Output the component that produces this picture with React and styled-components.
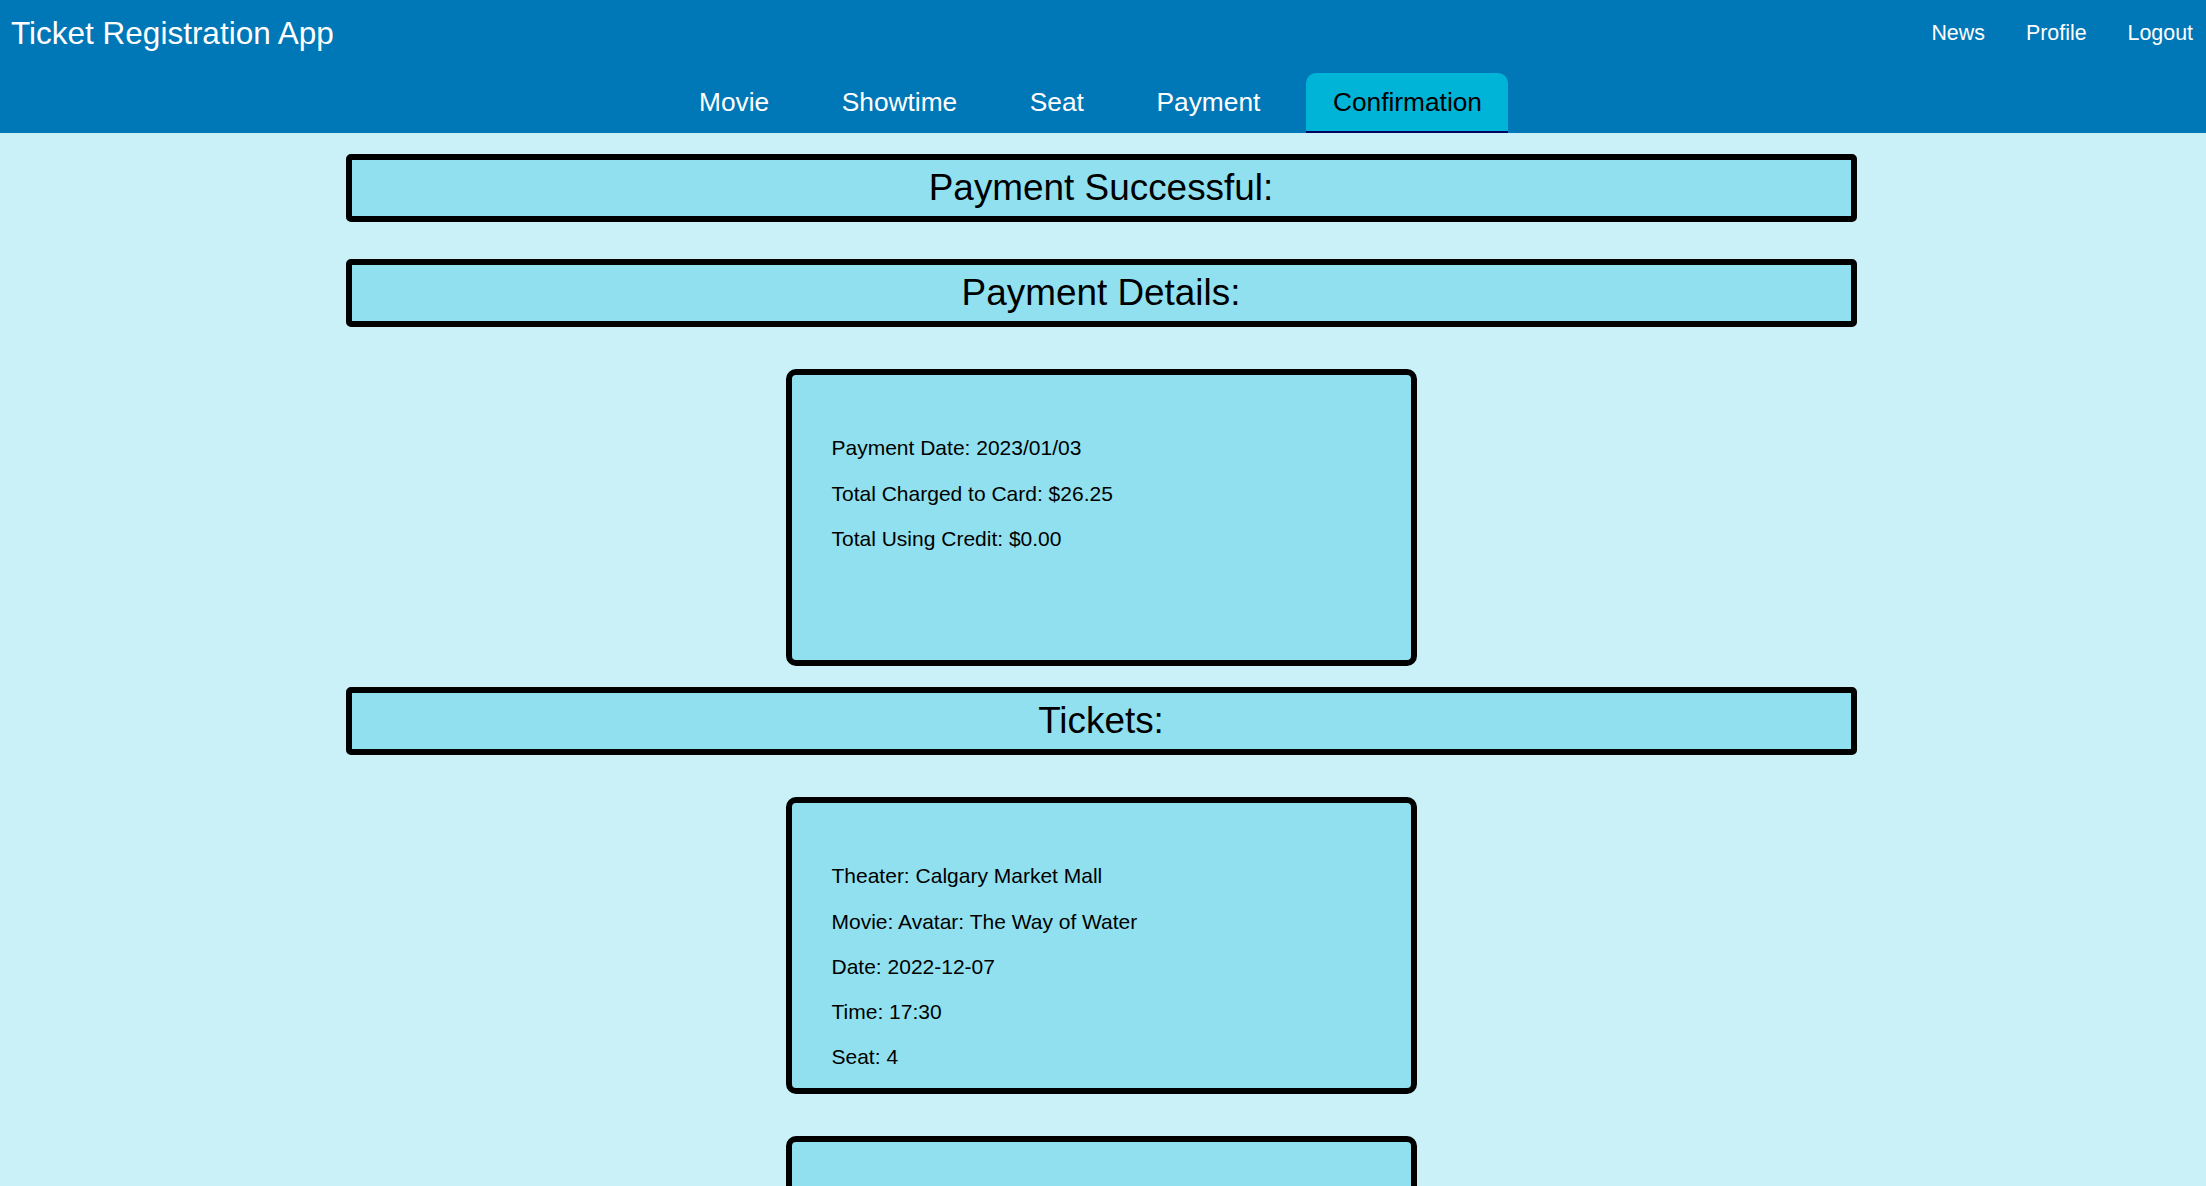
import React from "react";
import styled, { createGlobalStyle } from "styled-components";

const GlobalStyle = createGlobalStyle`
  html, body {
    margin: 0;
    padding: 0;
    background: #caf0f8;
    font-family: "Liberation Sans", Arial, sans-serif;
    color: #000;
  }
  * { box-sizing: border-box; }
`;

const Header = styled.header`
  background: #0077b6;
  display: flex;
  flex-direction: column;
`;

const TopRow = styled.div`
  height: 66px;
  display: flex;
  align-items: center;
  justify-content: space-between;
  padding: 0 13px 0 11px;
`;

const AppTitle = styled.h1`
  margin: 0;
  font-size: 31.5px;
  font-weight: 400;
  color: #fff;
  line-height: normal;
`;

const UserNav = styled.nav`
  display: flex;
  gap: 41px;
`;

const NavLink = styled.a`
  color: #fff;
  font-size: 21.4px;
  text-decoration: none;
  cursor: pointer;
`;

const TabRow = styled.nav`
  display: flex;
  justify-content: center;
  gap: 19.6px;
  padding: 7px 25px 0 0;
`;

const Tab = styled.a`
  display: block;
  padding: 14px 26.5px;
  line-height: 30px;
  font-size: 26.3px;
  color: ${(p) => (p.$active ? "#000" : "#fff")};
  background: ${(p) => (p.$active ? "#00b4d8" : "transparent")};
  border-bottom: 2px solid ${(p) => (p.$active ? "#03045e" : "transparent")};
  border-radius: 10px 10px 0 0;
  text-decoration: none;
  cursor: pointer;
`;

const Main = styled.main`
  display: block;
  padding: 0 4px 40px 0;
  overflow: hidden;
`;

const SectionTitle = styled.h2`
  width: 1511px;
  height: 68px;
  margin: 21px auto 37px;
  display: flex;
  align-items: center;
  justify-content: center;
  background: #90e0ef;
  border: 6px solid #000;
  border-radius: 5px;
  font-size: 36.9px;
  font-weight: 400;
  line-height: normal;
`;

const Card = styled.section`
  width: 631px;
  height: 297px;
  margin: 42px auto 21px;
  padding: 40px;
  background: #90e0ef;
  border: 6px solid #000;
  border-radius: 10px;
`;

const Line = styled.p`
  margin: 21.3px 0;
  font-size: 21px;
  line-height: normal;
`;

const tabs = ["Movie", "Showtime", "Seat", "Payment", "Confirmation"];

const tickets = [
  {
    theater: "Calgary Market Mall",
    movie: "Avatar: The Way of Water",
    date: "2022-12-07",
    time: "17:30",
    seat: "4",
  },
];

export default function App() {
  return (
    <>
      <GlobalStyle />
      <Header>
        <TopRow>
          <AppTitle>Ticket Registration App</AppTitle>
          <UserNav>
            <NavLink>News</NavLink>
            <NavLink>Profile</NavLink>
            <NavLink>Logout</NavLink>
          </UserNav>
        </TopRow>
        <TabRow>
          {tabs.map((t) => (
            <Tab key={t} $active={t === "Confirmation"}>
              {t}
            </Tab>
          ))}
        </TabRow>
      </Header>
      <Main>
        <SectionTitle>Payment Successful:</SectionTitle>
        <SectionTitle>Payment Details:</SectionTitle>
        <Card>
          <Line>Payment Date: 2023/01/03</Line>
          <Line>Total Charged to Card: $26.25</Line>
          <Line>Total Using Credit: $0.00</Line>
        </Card>
        <SectionTitle>Tickets:</SectionTitle>
        {tickets.map((t, i) => (
          <Card key={i}>
            <Line>Theater: {t.theater}</Line>
            <Line>Movie: {t.movie}</Line>
            <Line>Date: {t.date}</Line>
            <Line>Time: {t.time}</Line>
            <Line>Seat: {t.seat}</Line>
          </Card>
        ))}
        <Card />
      </Main>
    </>
  );
}
